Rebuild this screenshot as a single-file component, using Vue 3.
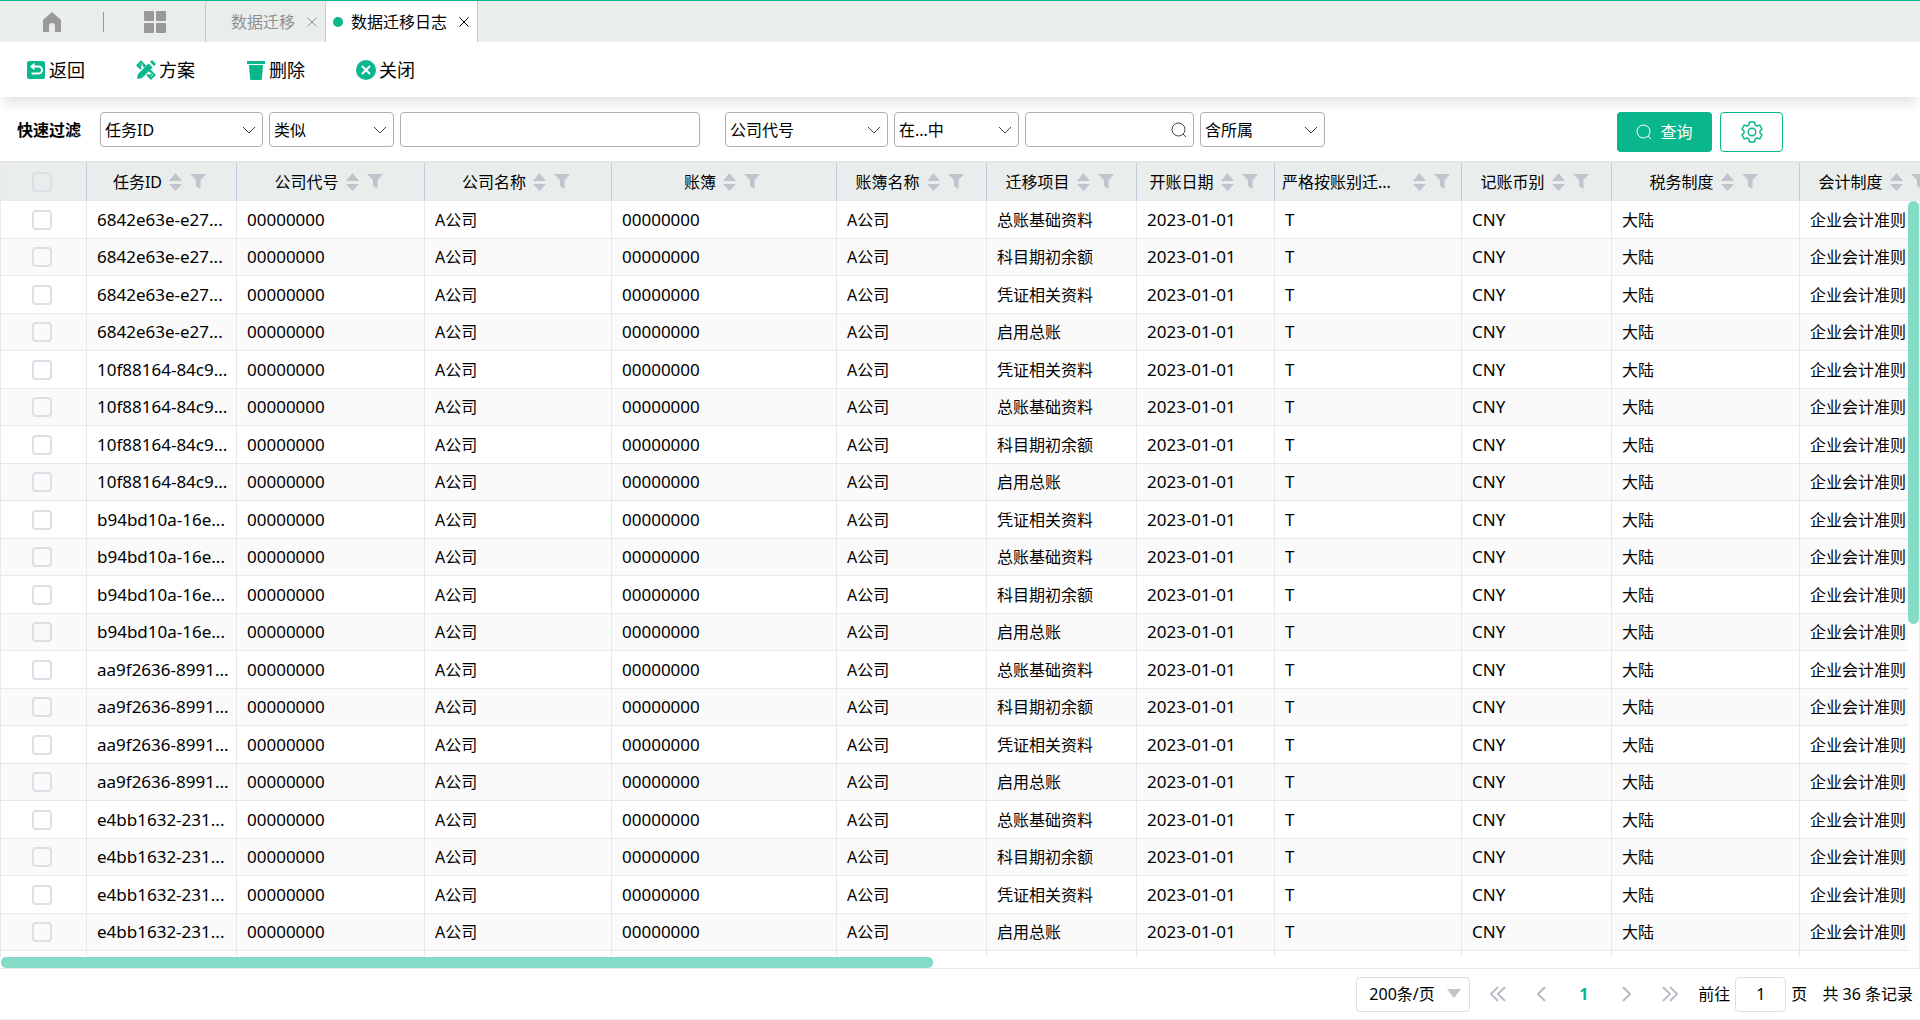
<script setup>
import { ref } from 'vue'

const columns = [
  { key: 'task', title: '任务ID', width: 150, latin: true },
  { key: 'code', title: '公司代号', width: 188, latin: true },
  { key: 'company', title: '公司名称', width: 187 },
  { key: 'book', title: '账簿', width: 225, latin: true },
  { key: 'bookName', title: '账簿名称', width: 150 },
  { key: 'item', title: '迁移项目', width: 150 },
  { key: 'date', title: '开账日期', width: 138, latin: true },
  { key: 'strict', title: '严格按账别迁...', width: 187, latin: true },
  { key: 'currency', title: '记账币别', width: 150, latin: true },
  { key: 'tax', title: '税务制度', width: 188 },
  { key: 'accounting', title: '会计制度', width: 150 },
]

const base = '总账基础资料'
const opening = '科目期初余额'
const voucher = '凭证相关资料'
const enable = '启用总账'

const tasks = [
  ['6842e63e-e27...', [base, opening, voucher, enable]],
  ['10f88164-84c9...', [voucher, base, opening, enable]],
  ['b94bd10a-16e...', [voucher, base, opening, enable]],
  ['aa9f2636-8991...', [base, opening, voucher, enable]],
  ['e4bb1632-231...', [base, opening, voucher, enable]],
]

const rows = tasks.flatMap(([task, items]) =>
  items.map((item) => ({
    task,
    code: '00000000',
    company: 'A公司',
    book: '00000000',
    bookName: 'A公司',
    item,
    date: '2023-01-01',
    strict: 'T',
    currency: 'CNY',
    tax: '大陆',
    accounting: '企业会计准则',
  }))
)

const keyword = ref('')
const company = ref('')
const page = ref('1')
</script>

<template>
  <div class="page">
    <header class="tabs">
      <button class="tab-icon home" aria-label="首页">
        <svg width="20" height="22" viewBox="0 0 20 22"><path fill="#999" d="M10 1 1 9v11a1 1 0 0 0 1 1h5v-6a3 3 0 0 1 6 0v6h5a1 1 0 0 0 1-1V9z" /></svg>
      </button>
      <span class="split"></span>
      <button class="tab-icon apps" aria-label="应用">
        <svg width="22" height="22" viewBox="0 0 22 22" fill="#999"><rect x="0" y="0" width="10" height="10" rx="1" /><rect x="12" y="0" width="10" height="10" rx="1" /><rect x="0" y="12" width="10" height="10" rx="1" /><rect x="12" y="12" width="10" height="10" rx="1" /></svg>
      </button>
      <nav class="tab-list">
        <div class="tab">
          <a href="#">数据迁移</a>
          <button class="close" aria-label="关闭数据迁移">
            <svg width="10" height="10" viewBox="0 0 10 10"><path d="M.5.5l9 9M9.5.5l-9 9" stroke="currentColor" fill="none" /></svg>
          </button>
        </div>
        <div class="tab active">
          <i class="dot"></i>
          <a href="#">数据迁移日志</a>
          <button class="close" aria-label="关闭数据迁移日志">
            <svg width="10" height="10" viewBox="0 0 10 10"><path d="M.5.5l9 9M9.5.5l-9 9" stroke="currentColor" fill="none" /></svg>
          </button>
        </div>
      </nav>
    </header>

    <div class="toolbar">
      <button class="tool">
        <svg width="20" height="20" viewBox="0 0 20 20"><rect x="1" y="1" width="18" height="18" rx="2" fill="#0ab68b" /><path d="M5 6.500h7.500a3.400 3.400 0 0 1 0 7H5.500" fill="none" stroke="#fff" stroke-width="2" /><path d="M8.500 2.800v7.400L4 6.500z" fill="#fff" /></svg>
        <span>返回</span>
      </button>
      <button class="tool">
        <svg width="20" height="20" viewBox="0 0 20 20"><g fill="#0ab68b"><path d="M12.600 3.400 16.600 7.400 6 18 1 19 2 14z" /><path d="M14 2 16 0 20 4 18 6z" /></g><g fill="none" stroke="#0ab68b" stroke-width="2"><path d="M7.500 7 8.800 5.500 5 1.700 1.500 5.200 5 9M3.800 6.200 5.600 4.400M13 11.500 14.500 11 18.500 15 15 18.500 11 14.500M13.800 16 15.600 14.200" /></g></svg>
        <span>方案</span>
      </button>
      <button class="tool">
        <svg width="20" height="20" viewBox="0 0 20 20" fill="#0ab68b"><path d="M1 1h18v3H1zM3 5h14l-1 13.500a1.500 1.500 0 0 1-1.500 1.500h-9A1.500 1.500 0 0 1 4 18.500z" /></svg>
        <span>删除</span>
      </button>
      <button class="tool">
        <svg width="20" height="20" viewBox="0 0 20 20"><circle cx="10" cy="10" r="10" fill="#0ab68b" /><path d="M6 6l8 8M14 6l-8 8" stroke="#fff" stroke-width="2" /></svg>
        <span>关闭</span>
      </button>
    </div>

    <form class="filters" @submit.prevent>
      <strong>快速过滤</strong>
      <div class="group">
        <span class="field wide">
          <select aria-label="过滤字段"><option>任务ID</option></select>
          <svg class="chevron" width="14" height="8" viewBox="0 0 14 8"><path d="M1 1l6 6 6-6" /></svg>
        </span>
        <span class="field">
          <select aria-label="过滤条件"><option>类似</option></select>
          <svg class="chevron" width="14" height="8" viewBox="0 0 14 8"><path d="M1 1l6 6 6-6" /></svg>
        </span>
        <span class="field text"><input v-model="keyword" type="text" aria-label="过滤值" /></span>
      </div>
      <div class="group">
        <span class="field wide">
          <select aria-label="公司字段"><option>公司代号</option></select>
          <svg class="chevron" width="14" height="8" viewBox="0 0 14 8"><path d="M1 1l6 6 6-6" /></svg>
        </span>
        <span class="field">
          <select aria-label="公司条件"><option>在...中</option></select>
          <svg class="chevron" width="14" height="8" viewBox="0 0 14 8"><path d="M1 1l6 6 6-6" /></svg>
        </span>
        <span class="field search">
          <input v-model="company" type="text" aria-label="公司" />
          <svg class="chevron lens" width="16" height="16" viewBox="0 0 16 16"><circle cx="7.500" cy="7.500" r="6.500" /><path d="M12 12l3 3" /></svg>
        </span>
        <span class="field">
          <select aria-label="范围"><option>含所属</option></select>
          <svg class="chevron" width="14" height="8" viewBox="0 0 14 8"><path d="M1 1l6 6 6-6" /></svg>
        </span>
      </div>
      <div class="actions">
        <button class="query">
          <svg width="16" height="16" viewBox="0 0 16 16" fill="none" stroke="#fff"><circle cx="7.500" cy="7.500" r="6.500" /><path d="M12 12l3 3" /></svg>
          <span>查询</span>
        </button>
        <button class="settings" type="button" aria-label="设置">
          <svg width="22" height="22" viewBox="0 0 22 22" fill="none" stroke="#0ab68b" stroke-width="1.500" stroke-linejoin="round"><path d="M8.600 1h4.800l.7 2.900 1.900 1.100 2.800-.9 2.200 3.900-2 2v2l2 2-2.200 3.900-2.800-.9-1.900 1.100-.7 2.900H8.600l-.7-2.900L6 17l-2.800.9L1 14l2-2v-2L1 8l2.200-3.900L6 5l1.900-1.100z" /><circle cx="11" cy="11" r="3.800" /></svg>
        </button>
      </div>
    </form>

    <main class="grid">
      <div class="viewport">
        <table>
          <colgroup>
            <col class="check-col" />
            <col v-for="c in columns" :key="c.key" :style="{ width: c.width + 'px' }" />
          </colgroup>
          <thead>
            <tr>
              <th class="check"><input type="checkbox" aria-label="全选" /></th>
              <th v-for="c in columns" :key="c.key">
                <div class="head">
                  <span class="title">{{ c.title }}</span>
                  <svg class="sort" width="13" height="18" viewBox="0 0 13 18"><path d="M6.500 0 13 8H0zM0 11h13l-6.500 7z" /></svg>
                  <svg class="funnel" width="16" height="15" viewBox="0 0 16 15"><path d="M0 0h16l-5.500 6v9L6 12V6z" /></svg>
                </div>
              </th>
            </tr>
          </thead>
          <tbody>
            <tr v-for="(r, i) in rows" :key="i">
              <td class="check"><input type="checkbox" :aria-label="'选择第' + (i + 1) + '行'" /></td>
              <td v-for="c in columns" :key="c.key" :class="{ latin: c.latin }">{{ r[c.key] }}</td>
            </tr>
            <tr aria-hidden="true">
              <td class="check"></td>
              <td v-for="c in columns" :key="c.key"></td>
            </tr>
          </tbody>
        </table>
        <div class="v-track"><div class="v-thumb"></div></div>
      </div>
      <div class="h-track"><div class="h-thumb"></div></div>
    </main>

    <footer class="pager">
      <span class="size">
        <select aria-label="每页条数"><option>200条/页</option></select>
        <svg class="caret" width="14" height="9" viewBox="0 0 14 9"><path d="M0 0h14L7 9z" fill="#c0c4cc" /></svg>
      </span>
      <div class="pages">
        <button aria-label="首页"><svg width="18" height="16" viewBox="0 0 18 16"><path d="M9 1 2 8l7 7M16 1 9 8l7 7" /></svg></button>
        <button aria-label="上一页"><svg width="18" height="16" viewBox="0 0 18 16"><path d="M13 1 6 8l7 7" /></svg></button>
        <button class="current">1</button>
        <button aria-label="下一页"><svg width="18" height="16" viewBox="0 0 18 16"><path d="M5 1l7 7-7 7" /></svg></button>
        <button aria-label="末页"><svg width="18" height="16" viewBox="0 0 18 16"><path d="M2 1l7 7-7 7M9 1l7 7-7 7" /></svg></button>
      </div>
      <label class="jump">前往<input v-model="page" type="text" />页</label>
      <span class="total">共 36 条记录</span>
    </footer>
  </div>
</template>

<style>
body {
  background: #fff;
}
</style>

<style scoped>
.page {
  display: flex;
  flex-direction: column;
  height: 100vh;
  box-sizing: border-box;
  border-bottom: 1px solid #ebeef0;
  overflow: hidden;
  font: 16px/24px "Noto Sans", "Noto Sans CJK SC", sans-serif;
  color: #000;
}
.page * {
  box-sizing: border-box;
}
button,
input,
select {
  font: inherit;
  color: inherit;
  margin: 0;
  padding: 0;
  border: 0;
  background: none;
}
svg {
  display: block;
  flex: none;
}
a {
  color: inherit;
  text-decoration: none;
}

/* tab strip */
.tabs {
  flex: none;
  display: flex;
  align-items: center;
  height: 42px;
  border-top: 1px solid #0ab68b;
  background: #e9edec;
}
.tab-icon {
  display: flex;
  justify-content: center;
}
.home {
  width: 103px;
}
.split {
  width: 1px;
  height: 20px;
  background: #999;
}
.apps {
  width: 101px;
}
.tab-list {
  display: flex;
  align-self: stretch;
}
.tab {
  display: flex;
  align-items: center;
  padding: 0 8px 0 25px;
  gap: 12px;
  border-left: 1px solid #c4c8c7;
  border-radius: 4px 0 0 0;
  color: #909090;
}
.tab.active {
  padding: 0 8px 0 7px;
  gap: 8px;
  border-right: 1px solid #c4c8c7;
  background: #fff;
  color: #000;
}
.tab.active .close {
  padding-left: 4px;
}
.dot {
  width: 10px;
  height: 10px;
  border-radius: 5px;
  background: #0ab68b;
}

/* toolbar */
.toolbar {
  flex: none;
  position: relative;
  display: flex;
  gap: 51px;
  height: 55px;
  padding: 0 26px;
  background: #fff;
  box-shadow: 0 11px 10px -4px rgba(0, 0, 0, 0.1);
}
.tool {
  display: flex;
  align-items: center;
  gap: 3px;
  font-size: 18px;
}

/* quick filter */
.filters {
  flex: none;
  display: flex;
  align-items: flex-start;
  height: 64px;
  padding: 15px 137px 0 17px;
}
.filters strong {
  width: 83px;
  line-height: 36px;
}
.group {
  display: flex;
  gap: 6px;
  margin-right: 25px;
}
.field {
  position: relative;
  width: 125px;
}
.field.wide {
  width: 163px;
}
.field.text {
  width: 300px;
}
.field.search {
  width: 169px;
}
.field select,
.field input {
  display: block;
  width: 100%;
  height: 35px;
  padding: 0 4px;
  border: 1px solid #b0b0b0;
  border-radius: 4px;
  background: #fff;
  appearance: none;
}
.chevron {
  position: absolute;
  top: 14px;
  right: 7px;
  fill: none;
  stroke: #444;
  pointer-events: none;
}
.lens {
  top: 10px;
}
.actions {
  display: flex;
  gap: 8px;
  margin-left: auto;
}
.actions button {
  display: flex;
  align-items: center;
  justify-content: center;
  height: 40px;
  border-radius: 4px;
}
.query {
  width: 95px;
  gap: 8px;
  background: #0ab68b;
  color: #fff;
}
.settings {
  width: 63px;
  border: 1px solid #0ab68b;
}

/* data grid */
.grid {
  flex: 1;
  min-height: 0;
  display: flex;
  flex-direction: column;
  border-top: 2px solid #e4e4e4;
  border-bottom: 1px solid #e8eaec;
}
.viewport {
  position: relative;
  flex: 1;
  min-height: 0;
  overflow: hidden;
}
table {
  table-layout: fixed;
  width: 1950px;
  border-collapse: separate;
  border-spacing: 0;
}
.check-col {
  width: 87px;
}
th {
  height: 38px;
  padding: 0 7px;
  border-right: 1px solid #c3c8dc;
  border-bottom: 1px solid #e8eaec;
  background: #e9edec;
  font-weight: normal;
}
.head {
  display: flex;
  align-items: center;
  justify-content: center;
}
.title {
  flex: 0 1 auto;
  min-width: 0;
  overflow: hidden;
  white-space: nowrap;
}
th:nth-child(9) .title {
  flex-grow: 1;
  text-align: left;
}
.sort {
  margin: 0 8px 0 7px;
  fill: #c0c4cc;
}
.funnel {
  margin-right: 4px;
  fill: #c0c4cc;
}
td {
  height: 38px;
  padding: 0 0 0 10px;
  border-right: 1px solid #e8e8e8;
  border-bottom: 1px solid #e8e8e8;
  white-space: nowrap;
}
tr:nth-child(even) td {
  height: 37px;
  background: #fafafa;
}
.latin {
  font-size: 17px;
}
th.check,
td.check {
  padding: 0 3px 0 0;
  border-left: 1px solid #e8eaec;
}
.check input {
  display: block;
  width: 20px;
  height: 20px;
  margin: 0 auto;
  border: 2px solid #dcdfe6;
  border-radius: 4px;
  appearance: none;
}
.v-track {
  position: absolute;
  top: 38px;
  right: 0;
  bottom: 0;
  width: 12px;
  border-right: 1px solid #e8eaec;
  background: #fff;
}
.v-thumb {
  height: 56%;
  border-radius: 6px;
  background: #84dbc6;
}
.h-track {
  flex: none;
  height: 11px;
  padding-left: 1px;
  border-right: 1px solid #e8eaec;
}
.h-thumb {
  width: calc(100% * 17 / 35);
  height: 11px;
  border-radius: 5px;
  background: #84dbc6;
}

/* pager */
.pager {
  flex: none;
  display: flex;
  align-items: center;
  justify-content: flex-end;
  height: 50px;
  padding-right: 7px;
}
.size {
  position: relative;
}
.size select {
  display: block;
  width: 114px;
  height: 35px;
  padding-left: 12px;
  border: 1px solid #dcdfe6;
  border-radius: 4px;
  appearance: none;
}
.caret {
  position: absolute;
  top: 12px;
  right: 9px;
  pointer-events: none;
}
.pages {
  display: flex;
  margin: 0 7px 0 6px;
}
.pages button {
  display: flex;
  align-items: center;
  justify-content: center;
  width: 43px;
}
.pages path {
  fill: none;
  stroke: #b8bcc4;
  stroke-width: 2;
}
.pages .current {
  color: #0ab68b;
  font-weight: bold;
}
.jump {
  display: flex;
  align-items: center;
  gap: 5px;
}
.jump input {
  width: 51px;
  height: 35px;
  border: 1px solid #dcdfe6;
  border-radius: 4px;
  text-align: center;
}
.total {
  margin-left: 15px;
}
</style>
